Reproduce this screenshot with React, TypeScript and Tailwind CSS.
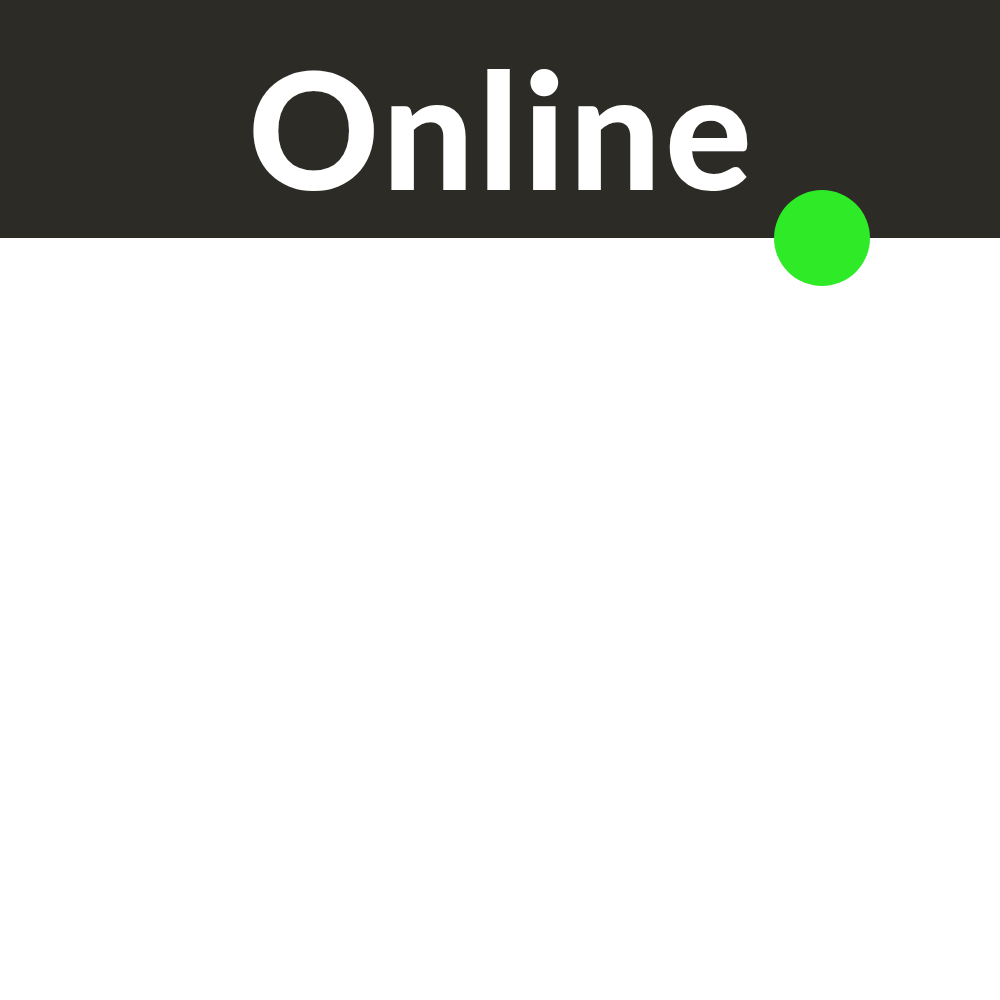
const App = () => {
  return (
    <div className="min-h-[1000px] w-full bg-white">
      {/* Header bar with status dot */}
      <header className="relative flex h-[238px] items-start justify-center bg-[#2c2b26]">
        <h1 className="mt-[31px] mr-[-4px] font-['Lato',sans-serif] text-[162px] leading-[1.2] font-black tracking-[4px] text-white">
          Online
        </h1>
        <span className="absolute left-[774px] top-[190px] h-[96px] w-[96px] rounded-full bg-[#2eea27]" />
      </header>
    </div>
  );
};

export default App;
